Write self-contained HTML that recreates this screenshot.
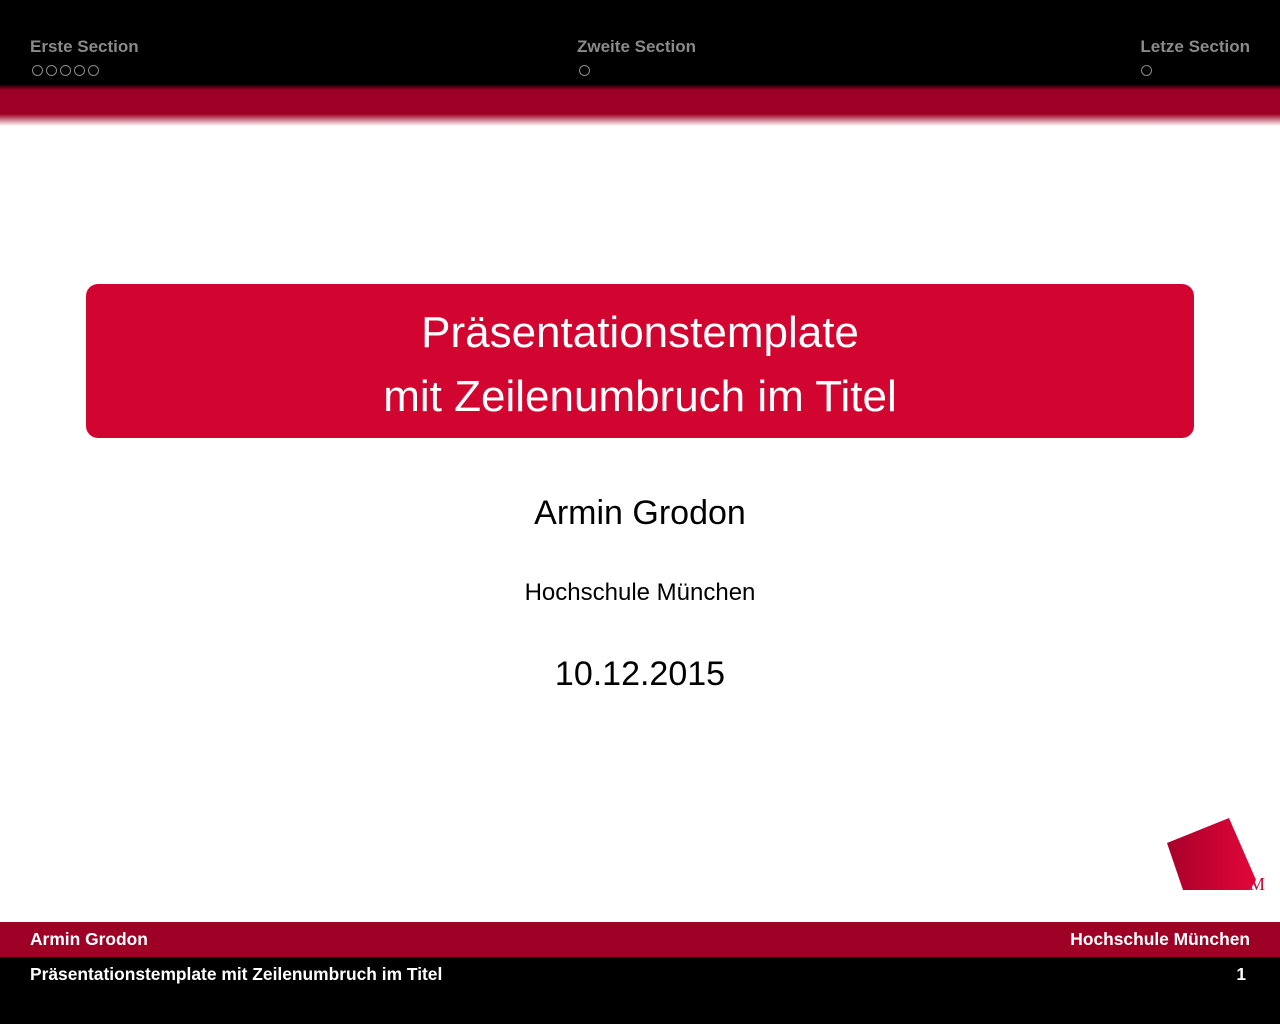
<!DOCTYPE html>
<html><head><meta charset="utf-8"><style>
body{margin:0;width:1280px;height:1024px;position:relative;background:#fff;font-family:"Liberation Sans",sans-serif;overflow:hidden}
.top{position:absolute;left:0;top:0;width:1280px;height:84px;background:#000}
.band{position:absolute;left:0;top:84px;width:1280px;height:42px;background:linear-gradient(#000 0px,#9e0025 6px,#9e0025 30px,#fff 42px)}
.sec{position:absolute;top:37px;color:#8a8a8a;font-size:17px;font-weight:bold}
.dots{position:absolute;top:65px;height:12px;display:flex;gap:3px}
.dots i{display:block;width:9px;height:9px;border:1.5px solid #8a8a8a;border-radius:50%}
.box{position:absolute;left:86px;top:284px;width:1108px;height:154px;background:#d20531;border-radius:12px;color:#fff;text-align:center;font-size:44px;line-height:64px;padding-top:17px;box-sizing:border-box}
.c{position:absolute;left:0;width:1280px;text-align:center;color:#000}
.f1{position:absolute;left:0;top:922px;width:1280px;height:35px;background:#9e0025}
.f2{position:absolute;left:0;top:957px;width:1280px;height:67px;background:#000}
.ft{position:absolute;color:#fff;font-size:17.4px;font-weight:bold}
</style></head><body>
<div class="top"></div><div class="band"></div>
<div class="sec" style="left:30px">Erste Section</div>
<div class="dots" style="left:32px"><i></i><i></i><i></i><i></i><i></i></div>
<div class="sec" style="left:577px">Zweite Section</div>
<div class="dots" style="left:579px"><i></i></div>
<div class="sec" style="right:30px">Letze Section</div>
<div class="dots" style="left:1141px"><i></i></div>
<div class="box">Präsentationstemplate<br>mit Zeilenumbruch im Titel</div>
<div class="c" style="top:494px;font-size:34px">Armin Grodon</div>
<div class="c" style="top:579px;font-size:24px">Hochschule München</div>
<div class="c" style="top:655px;font-size:34px">10.12.2015</div>
<svg style="position:absolute;left:1160px;top:812px" width="120" height="82">
<defs><linearGradient id="g" x1="0" x2="1"><stop offset="0" stop-color="#a8002a"/><stop offset="1" stop-color="#e2063a"/></linearGradient></defs>
<polygon points="7,31 69,6 96,68 90,78 23,78" fill="url(#g)"/>
<text x="89" y="78" font-family="Liberation Serif,serif" font-size="18" fill="#d20531">M</text>
</svg>
<div class="f1"></div><div class="f2"></div>
<div class="ft" style="left:30px;top:929px">Armin Grodon</div>
<div class="ft" style="right:30px;top:929px">Hochschule München</div>
<div class="ft" style="left:30px;top:964px">Präsentationstemplate mit Zeilenumbruch im Titel</div>
<div class="ft" style="right:34px;top:964px">1</div>
</body></html>
